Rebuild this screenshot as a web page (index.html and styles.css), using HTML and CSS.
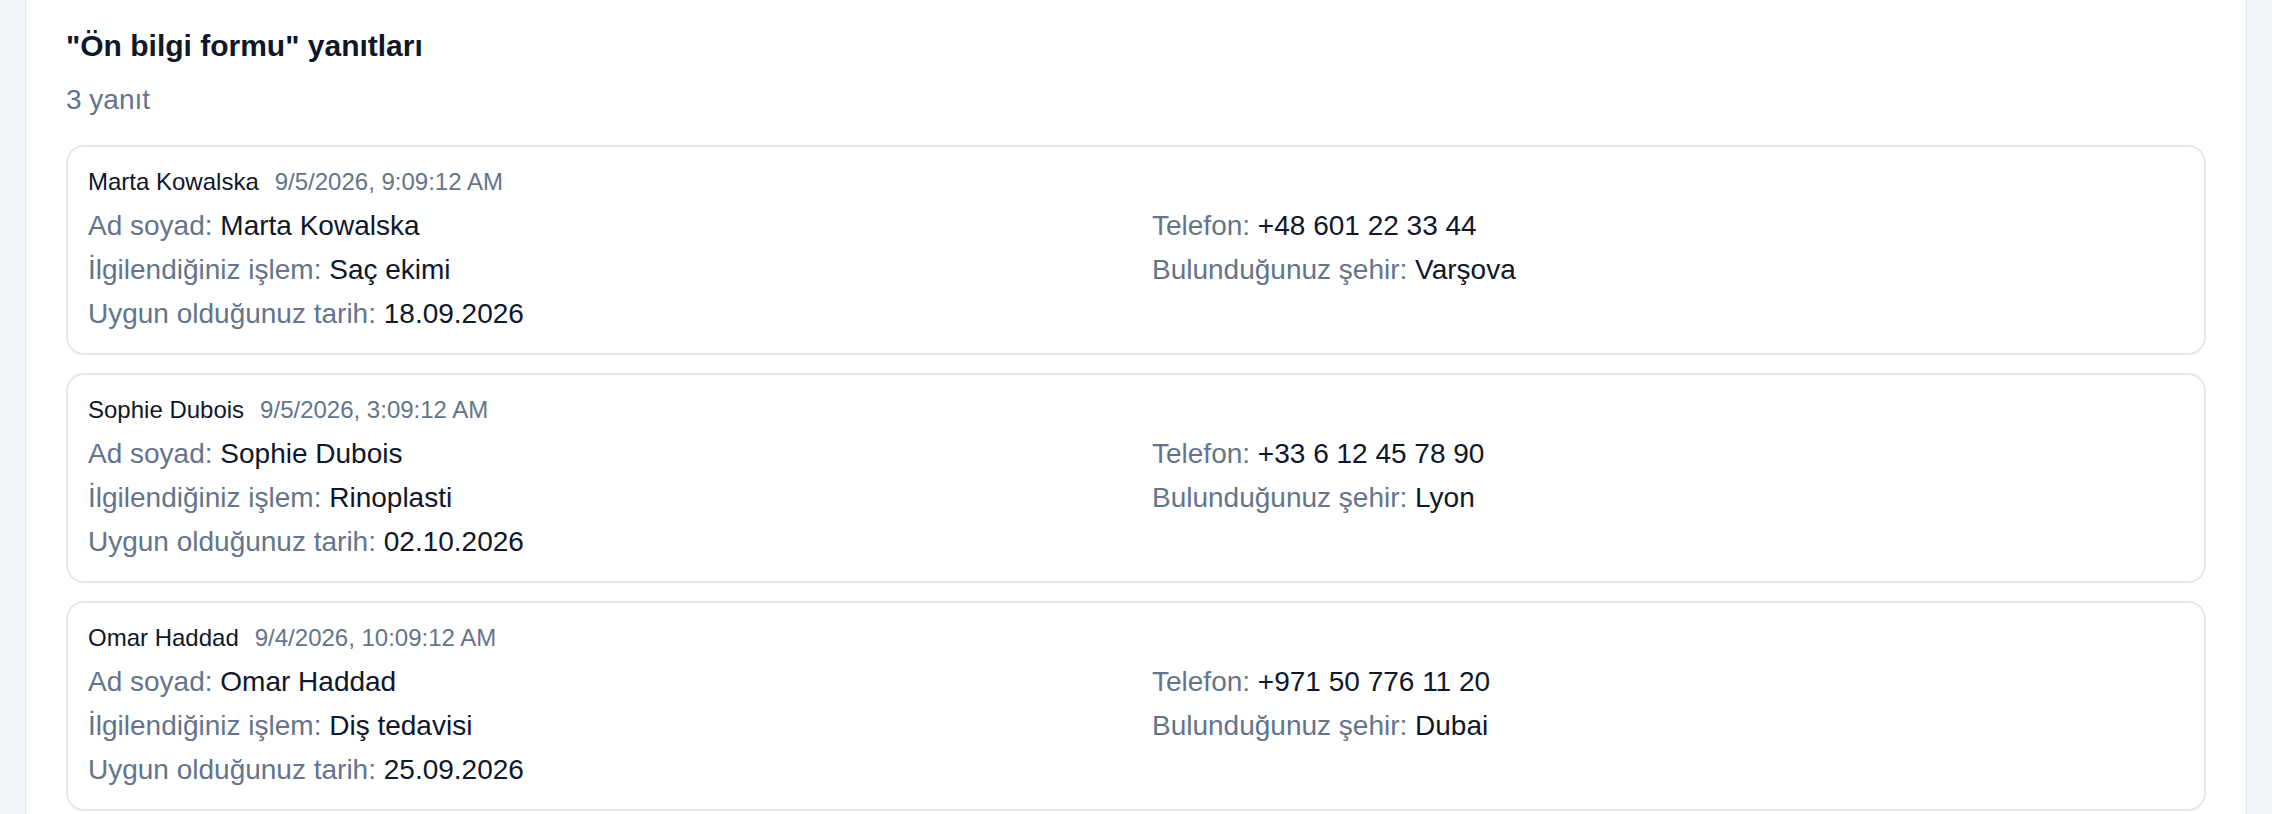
FILE: index.html
```html
<!DOCTYPE html>
<html lang="tr">
  <head>
    <meta charset="UTF-8" />
    <meta name="viewport" content="width=device-width, initial-scale=1.0" />
    <title>Ön bilgi formu yanıtları</title>
    <link rel="stylesheet" href="styles.css">
  </head>
  <body>
    <div class="panel">
      <h1>"Ön bilgi formu" yanıtları</h1>
      <p class="count">3 yanıt</p>

      <div class="responses">
        <div class="response">
          <div class="responseHead">
            <span class="who">Marta Kowalska</span>
            <span class="when">9/5/2026, 9:09:12 AM</span>
          </div>
          <div class="answers">
            <div class="answer"><span class="label">Ad soyad:</span> Marta Kowalska</div>
            <div class="answer"><span class="label">Telefon:</span> +48 601 22 33 44</div>
            <div class="answer"><span class="label">İlgilendiğiniz işlem:</span> Saç ekimi</div>
            <div class="answer"><span class="label">Bulunduğunuz şehir:</span> Varşova</div>
            <div class="answer"><span class="label">Uygun olduğunuz tarih:</span> 18.09.2026</div>
          </div>
        </div>

        <div class="response">
          <div class="responseHead">
            <span class="who">Sophie Dubois</span>
            <span class="when">9/5/2026, 3:09:12 AM</span>
          </div>
          <div class="answers">
            <div class="answer"><span class="label">Ad soyad:</span> Sophie Dubois</div>
            <div class="answer"><span class="label">Telefon:</span> +33 6 12 45 78 90</div>
            <div class="answer"><span class="label">İlgilendiğiniz işlem:</span> Rinoplasti</div>
            <div class="answer"><span class="label">Bulunduğunuz şehir:</span> Lyon</div>
            <div class="answer"><span class="label">Uygun olduğunuz tarih:</span> 02.10.2026</div>
          </div>
        </div>

        <div class="response">
          <div class="responseHead">
            <span class="who">Omar Haddad</span>
            <span class="when">9/4/2026, 10:09:12 AM</span>
          </div>
          <div class="answers">
            <div class="answer"><span class="label">Ad soyad:</span> Omar Haddad</div>
            <div class="answer"><span class="label">Telefon:</span> +971 50 776 11 20</div>
            <div class="answer"><span class="label">İlgilendiğiniz işlem:</span> Diş tedavisi</div>
            <div class="answer"><span class="label">Bulunduğunuz şehir:</span> Dubai</div>
            <div class="answer"><span class="label">Uygun olduğunuz tarih:</span> 25.09.2026</div>
          </div>
        </div>
      </div>
    </div>
  </body>
</html>
```

FILE: styles.css
```css
html,
body {
  height: 100%;
}

body {
  margin: 0;
  background-color: #f1f5f9;
  font-family: "Liberation Sans", Arial, sans-serif;
  color: #0f172a;
  overflow: hidden;
}

.panel {
  margin: 0 25px;
  min-height: 100%;
  box-sizing: border-box;
  background-color: #fff;
  border: 1px solid #e2e8f0;
  border-top: none;
  padding: 28px 40px 40px;
}

h1 {
  margin: 0 0 16px;
  font-size: 30px;
  line-height: 36px;
  font-weight: bold;
  color: #0f172a;
}

.count {
  margin: 0 0 25px;
  font-size: 28px;
  line-height: 40px;
  color: #64748b;
}

.responses {
  display: flex;
  flex-direction: column;
  gap: 18px;
}

.response {
  border: 2px solid #e2e8f0;
  border-radius: 18px;
  padding: 17px 20px;
}

.responseHead {
  display: flex;
  align-items: baseline;
  gap: 16px;
  font-size: 24px;
  line-height: 36px;
  margin-bottom: 4px;
}

.who {
  color: #0f172a;
}

.when {
  color: #64748b;
}

.answers {
  display: grid;
  grid-template-columns: 1fr 1fr;
  column-gap: 32px;
  font-size: 28px;
  line-height: 44px;
}

.answer {
  color: #0f172a;
}

.label {
  color: #64748b;
}
```
